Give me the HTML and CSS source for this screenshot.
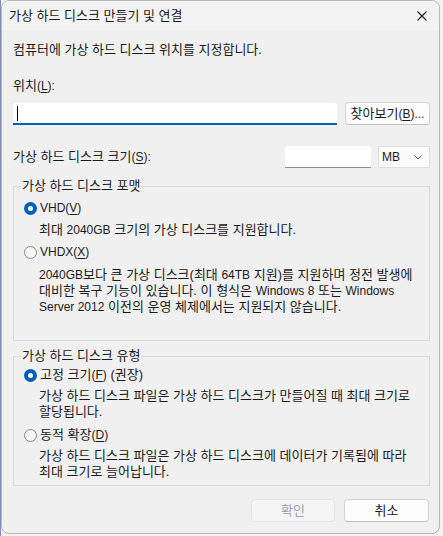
FILE: index.html
```html
<!DOCTYPE html>
<html lang="ko">
<head>
<meta charset="utf-8">
<title>가상 하드 디스크 만들기 및 연결</title>
<link rel="stylesheet" href="styles.css">
</head>
<body>
<div class="window">
  <div class="titlebar">
    <span class="title">가상 하드 디스크 만들기 및 연결</span>
    <svg class="close" width="10" height="10" viewBox="0 0 10 10"><path d="M0.5 0.5 L9.5 9.5 M9.5 0.5 L0.5 9.5" stroke="#1a1a1a" stroke-width="1.1" fill="none"/></svg>
  </div>
  <div class="content">
    <div class="intro">컴퓨터에 가상 하드 디스크 위치를 지정합니다.</div>
    <div class="loc-label">위치<span class="lat">(<u>L</u>):</span></div>
    <div class="path-row">
      <div class="textbox focused"><span class="caret"></span></div>
      <div class="btn browse">찾아보기<span class="lat">(<u>B</u>)...</span></div>
    </div>
    <div class="size-row">
      <div class="size-label">가상 하드 디스크 크기<span class="lat">(<u>S</u>):</span></div>
      <div class="size-input"></div>
      <div class="unit-select"><span class="lat">MB</span><svg width="8" height="5" viewBox="0 0 8 5"><path d="M0.5 0.5 L4 4 L7.5 0.5" stroke="#5c5c5c" stroke-width="1" fill="none"/></svg></div>
    </div>
    <fieldset class="group g1">
      <legend>가상 하드 디스크 포맷</legend>
      <div class="radio-row first"><span class="radio checked"></span><span class="lat">VHD(<u>V</u>)</span></div>
      <div class="desc">최대 <span class="lat">2040GB</span> 크기의 가상 디스크를 지원합니다.</div>
      <div class="radio-row"><span class="radio"></span><span class="lat">VHDX(<u>X</u>)</span></div>
      <div class="desc"><span class="lat">2040GB</span>보다 큰 가상 디스크(최대 <span class="lat">64TB</span> 지원)를 지원하며 정전 발생에<br>대비한 복구 기능이 있습니다. 이 형식은 <span class="lat">Windows 8</span> 또는 <span class="lat">Windows</span><br><span class="lat">Server 2012</span> 이전의 운영 체제에서는 지원되지 않습니다.</div>
    </fieldset>
    <fieldset class="group g2">
      <legend>가상 하드 디스크 유형</legend>
      <div class="radio-row first"><span class="radio checked"></span><span>고정 크기<span class="lat">(<u>F</u>)</span> (권장)</span></div>
      <div class="desc">가상 하드 디스크 파일은 가상 하드 디스크가 만들어질 때 최대 크기로<br>할당됩니다.</div>
      <div class="radio-row"><span class="radio"></span><span>동적 확장<span class="lat">(<u>D</u>)</span></span></div>
      <div class="desc">가상 하드 디스크 파일은 가상 하드 디스크에 데이터가 기록됨에 따라<br>최대 크기로 늘어납니다.</div>
    </fieldset>
    <div class="actions">
      <div class="btn disabled">확인</div>
      <div class="btn">취소</div>
    </div>
  </div>
</div>
</body>
</html>
```
FILE: styles.css
```css
html, body {
  margin: 0;
  padding: 0;
}
body {
  background: #f2f2f2;
  border-left: 1px solid #7d8fb0;
  box-sizing: border-box;
  font-family: "Liberation Sans", "Noto Sans CJK KR", sans-serif;
  font-size: 13px;
  line-height: 16px;
  color: #1a1a1a;
  width: 443px;
  height: 536px;
  overflow: hidden;
}
.lat {
  font-size: 12px;
}
u {
  text-decoration: underline;
  text-underline-offset: 2px;
}
.window {
  width: 439px;
  height: 534px;
  box-sizing: border-box;
  border: 1px solid #b9b9b9;
  border-radius: 8px;
  background: #f0f0f0;
  overflow: hidden;
  display: flex;
  flex-direction: column;
}
.titlebar {
  height: 30px;
  flex: none;
  background: #f3f3f3;
  display: flex;
  align-items: center;
  justify-content: space-between;
  padding: 0 6px 0 7px;
}
.title {
  color: #1a1a1a;
}
.close {
  margin-right: 6px;
}
.content {
  flex: 1;
  display: flex;
  flex-direction: column;
  padding: 11px 9px 0 11px;
}
.loc-label {
  margin-top: 20px;
}
.path-row {
  margin-top: 8px;
  display: flex;
  gap: 8px;
  height: 23px;
}
.textbox {
  flex: 1;
  background: #ffffff;
  border-radius: 3px 3px 0 0;
  box-sizing: border-box;
  border-bottom: 2px solid #005fb8;
  display: flex;
  align-items: center;
  padding-left: 4px;
  margin-top: 1px;
  height: 22px;
}
.caret {
  display: block;
  width: 1px;
  height: 15px;
  background: #000;
}
.btn {
  width: 85px;
  height: 23px;
  box-sizing: border-box;
  border: 1px solid #d3d3d3;
  border-bottom-color: #c2c2c2;
  border-radius: 4px;
  background: #fdfdfd;
  display: flex;
  align-items: center;
  justify-content: center;
  color: #1a1a1a;
}
.btn.disabled {
  background: #f5f5f5;
  border-color: #e4e4e4;
  color: #a3a3a3;
  width: 84px;
}
.size-row {
  margin-top: 21px;
  display: flex;
  align-items: center;
  height: 22px;
}
.size-label {
  flex: 1;
}
.size-input {
  width: 86px;
  height: 22px;
  box-sizing: border-box;
  background: #ffffff;
  border-bottom: 1px solid #8c8c8c;
  border-radius: 3px 3px 0 0;
}
.unit-select {
  margin-left: 7px;
  width: 52px;
  height: 22px;
  box-sizing: border-box;
  border: 1px solid #e0e0e0;
  background: #fbfbfb;
  display: flex;
  align-items: center;
  justify-content: space-between;
  padding: 0 7px 0 3px;
}
.group {
  margin: 10px 0 0 0;
  padding: 6px 10px 25px 10px;
  border: 1px solid #dadada;
  min-width: 0;
}
.group legend {
  padding: 0 1px;
  margin-left: -3px;
  line-height: 16px;
}
.g2 {
  margin-top: 7px;
  padding-top: 3px;
  padding-bottom: 5px;
}
.radio-row {
  display: flex;
  align-items: center;
  gap: 3px;
  margin-top: 6px;
  height: 16px;
}
.radio-row.first {
  margin-top: 0;
}
.radio {
  width: 13px;
  height: 13px;
  box-sizing: border-box;
  border-radius: 50%;
  border: 1px solid #868686;
  background: #f6f6f6;
  display: flex;
  align-items: center;
  justify-content: center;
}
.radio.checked {
  border: none;
  background: #005fb8;
}
.radio.checked::after {
  content: "";
  width: 5px;
  height: 5px;
  border-radius: 50%;
  background: #ffffff;
}
.desc {
  margin-top: 6px;
  padding-left: 15px;
  white-space: nowrap;
}
.g1 .desc:last-child {
  margin-top: 7px;
}
.g2 .desc {
  margin-top: 5px;
}
.g2 .radio-row {
  margin-top: 7px;
}
.g2 .radio-row.first {
  margin-top: 0;
}
.actions {
  margin-top: 13px;
  display: flex;
  justify-content: flex-end;
  gap: 9px;
  padding-right: 1px;
}
```
